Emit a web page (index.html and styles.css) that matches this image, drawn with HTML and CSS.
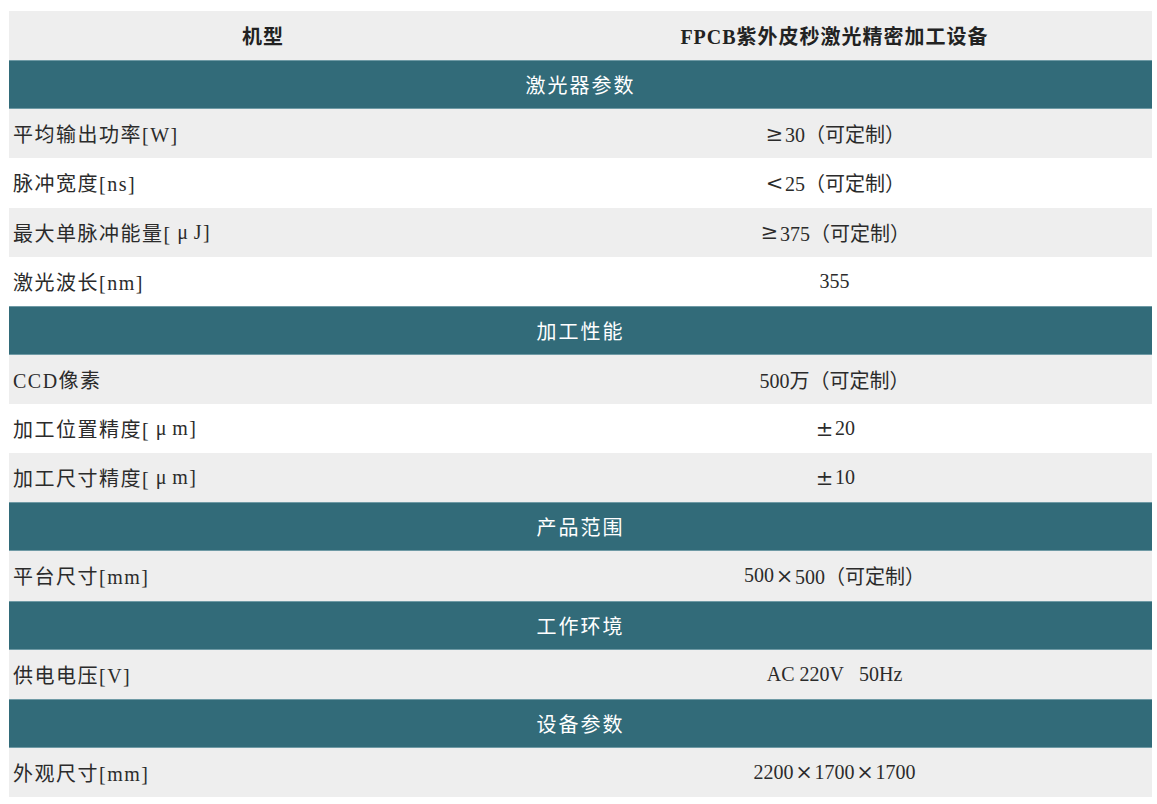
FILE: index.html
```html
<!DOCTYPE html>
<html lang="zh-CN">
<head>
<meta charset="utf-8">
<title>FPCB紫外皮秒激光精密加工设备</title>
<link rel="stylesheet" href="styles.css">
</head>
<body>
<div class="spec">
  <div class="row head"><div class="cell c">机型</div><div class="cell c">FPCB紫外皮秒激光精密加工设备</div></div>
  <div class="section">激光器参数</div>
  <div class="row gray"><div class="cell label">平均输出功率[W]</div><div class="cell c"><span class="fw">≥</span>30（可定制）</div></div>
  <div class="row white"><div class="cell label">脉冲宽度[ns]</div><div class="cell c"><span class="fw">&lt;</span>25（可定制）</div></div>
  <div class="row gray"><div class="cell label">最大单脉冲能量[<span class="fw mu">μ</span>J]</div><div class="cell c"><span class="fw">≥</span>375（可定制）</div></div>
  <div class="row white"><div class="cell label">激光波长[nm]</div><div class="cell c">355</div></div>
  <div class="section">加工性能</div>
  <div class="row gray"><div class="cell label">CCD像素</div><div class="cell c">500万（可定制）</div></div>
  <div class="row white"><div class="cell label">加工位置精度[<span class="fw mu">μ</span>m]</div><div class="cell c"><span class="fw">±</span>20</div></div>
  <div class="row gray"><div class="cell label">加工尺寸精度[<span class="fw mu">μ</span>m]</div><div class="cell c"><span class="fw">±</span>10</div></div>
  <div class="section">产品范围</div>
  <div class="row gray"><div class="cell label">平台尺寸[mm]</div><div class="cell c">500<span class="fw">×</span>500（可定制）</div></div>
  <div class="section">工作环境</div>
  <div class="row gray"><div class="cell label">供电电压[V]</div><div class="cell c">AC 220V&nbsp;&nbsp; 50Hz</div></div>
  <div class="section">设备参数</div>
  <div class="row gray"><div class="cell label">外观尺寸[mm]</div><div class="cell c">2200<span class="fw">×</span>1700<span class="fw">×</span>1700</div></div>
</div>
</body>
</html>
```

FILE: styles.css
```css
html, body {
  margin: 0;
  padding: 0;
  background: #ffffff;
}

body {
  font-family: "Liberation Serif", "Noto Sans CJK SC", serif;
  font-size: 20px;
  color: #2b2b2b;
}

.spec {
  margin: 11px 0 0 9px;
  width: 1143px;
  height: 786px;
  display: flex;
  flex-direction: column;
}

.row, .section {
  flex: 1 1 0;
}

.row {
  display: grid;
  grid-template-columns: 508px 1fr;
}

.cell {
  display: flex;
  align-items: center;
  white-space: pre;
}

.cell.c {
  justify-content: center;
}

.cell.label {
  padding-left: 4px;
  letter-spacing: 1.5px;
}

.fw {
  display: inline-block;
  width: 21px;
  text-align: center;
  font-family: "DejaVu Serif", "Liberation Serif", serif;
  font-size: 21px;
  font-weight: 300;
  letter-spacing: 0;
}

.fw.mu {
  font-family: "Liberation Serif", serif;
  font-size: 20px;
  width: 22px;
}

.head {
  background: #eeeeee;
  font-weight: bold;
  color: #222222;
  letter-spacing: 1px;
}

.gray {
  background: #eeeeee;
}

.white {
  background: #ffffff;
}

.section {
  background: #326b79;
  color: #ffffff;
  display: flex;
  align-items: center;
  justify-content: center;
  letter-spacing: 2px;
  box-shadow: inset 0 1px 0 #6f9aa5, inset 0 -1px 0 #6f9aa5;
}
```
